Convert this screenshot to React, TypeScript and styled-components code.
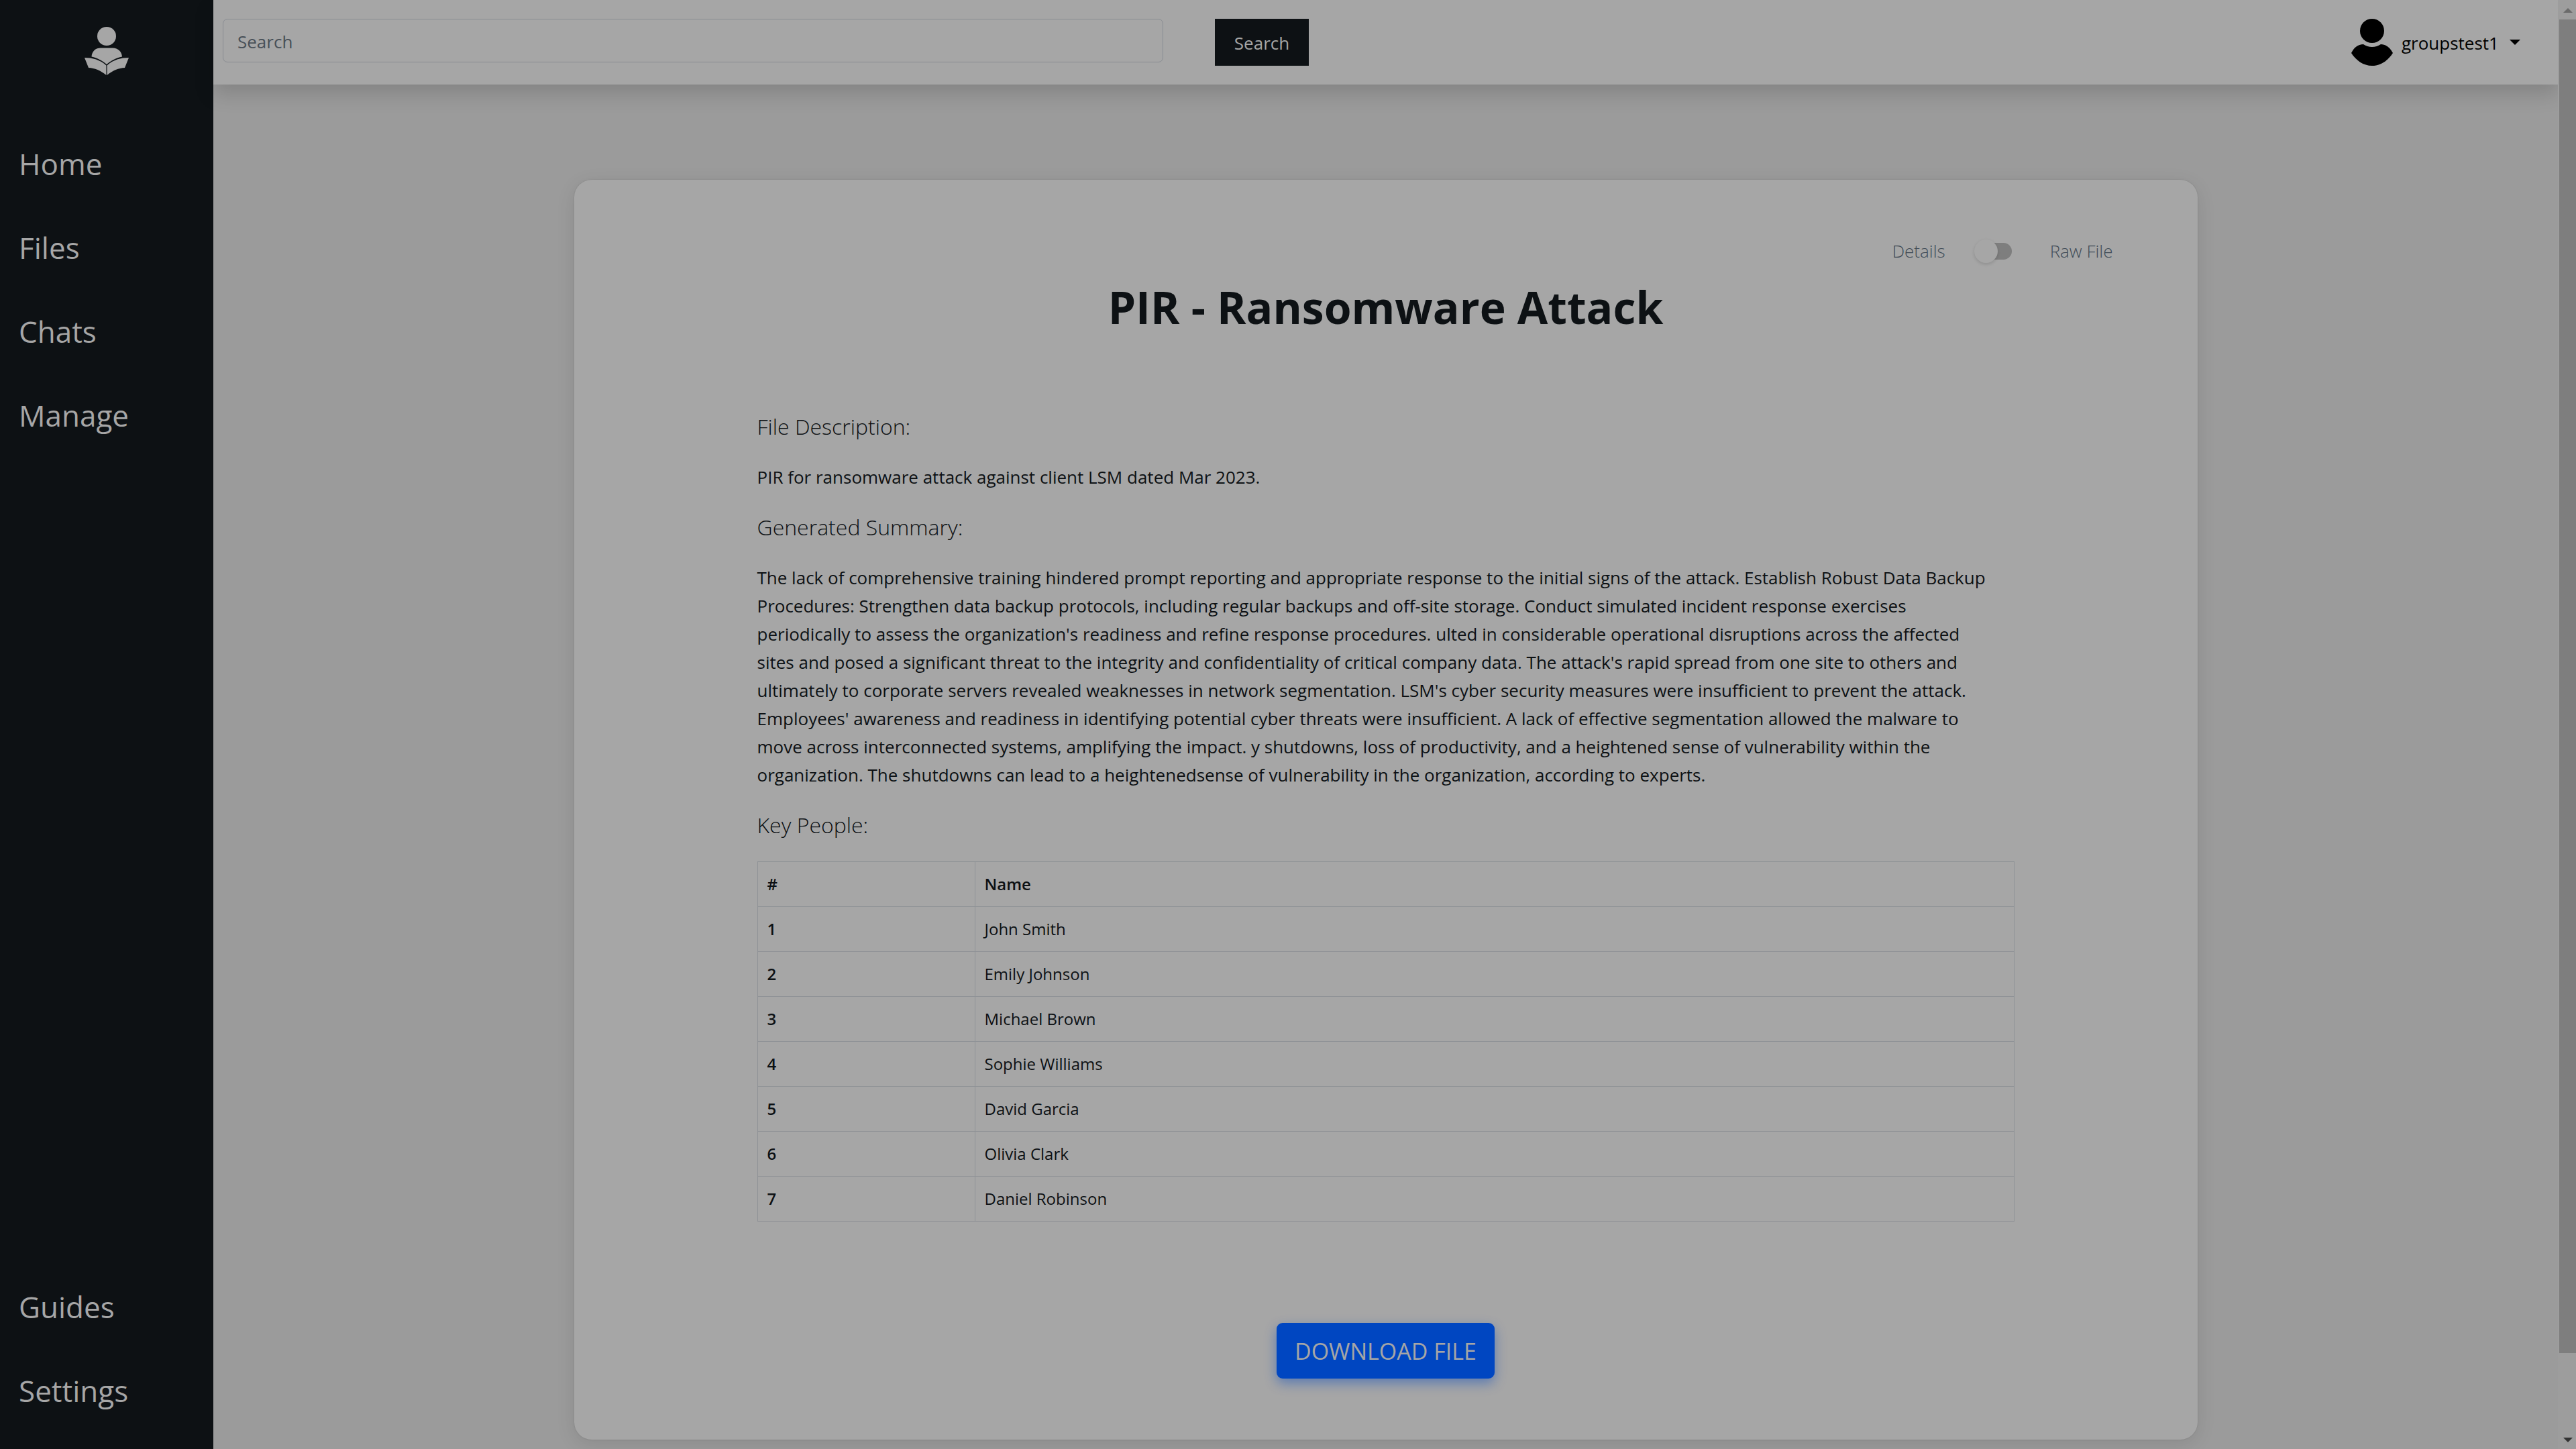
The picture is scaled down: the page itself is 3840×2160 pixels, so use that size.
import React from "react";
import styled, { createGlobalStyle } from "styled-components";

const ink = "#0d1114";
const paper = "#a6a6a6";
const line = "#8f9296";

const GlobalStyle = createGlobalStyle`
  *, *::before, *::after { box-sizing: border-box; }
  body {
    margin: 0;
    background: #9b9b9b;
    color: ${ink};
    font-family: "Segoe UI", "Open Sans", "Noto Sans", sans-serif;
    font-size: 26px;
    line-height: 42px;
  }
  button, input { font: inherit; }
`;

const Shell = styled.div`
  display: flex;
  height: 100vh;
  overflow: hidden;
`;

const Sidebar = styled.aside`
  flex: none;
  width: 318px;
  display: flex;
  flex-direction: column;
  padding: 40px 0 24px;
  background: ${ink};
`;

const Brand = styled.a`
  align-self: center;
  display: block;
  height: 72px;
  margin-bottom: 70px;
`;

const Nav = styled.nav<{ $bottom?: boolean }>`
  display: flex;
  flex-direction: column;
  margin-top: ${(p) => (p.$bottom ? "auto" : "0")};
`;

const NavLink = styled.a`
  padding: 28px;
  font-size: 44px;
  line-height: 69px;
  color: ${paper};
  text-decoration: none;
`;

const Main = styled.div`
  flex: 1;
  min-width: 0;
  display: flex;
  flex-direction: column;
`;

const TopBar = styled.header`
  display: flex;
  align-items: flex-start;
  justify-content: space-between;
  height: 126px;
  padding: 28px 56px 28px 14px;
  background: ${paper};
  box-shadow: 0 14px 28px rgba(0, 0, 0, 0.15);
`;

const SearchForm = styled.form`
  display: flex;
  align-items: flex-start;
  gap: 77px;
  flex: 0 1 1619px;
`;

const SearchInput = styled.input`
  flex: 1;
  min-width: 0;
  height: 65px;
  padding: 2px 21px 0;
  border: 1px solid #888c92;
  border-radius: 7px;
  background: transparent;
  color: ${ink};
  &::placeholder { color: #485058; opacity: 1; }
`;

const SearchButton = styled.button`
  width: 140px;
  height: 70px;
  padding: 2px 0 0;
  border: 0;
  background: ${ink};
  color: ${paper};
`;

const UserMenu = styled.button`
  display: flex;
  align-items: center;
  height: 70px;
  padding: 0;
  border: 0;
  background: none;
  color: #000;
`;

const UserName = styled.span`
  margin: 0 16px 0 13px;
  padding-top: 2px;
`;

const Content = styled.main`
  flex: 1;
  padding: 142px 28px 14px;
`;

const Card = styled.article`
  max-width: 2420px;
  margin: 0 auto;
  padding: 85px 126px 91px;
  border-radius: 26px;
  background: ${paper};
  box-shadow: 0 7px 28px rgba(0, 0, 0, 0.1), 0 0 2px rgba(0, 0, 0, 0.15);
`;

const ViewToggle = styled.div`
  display: flex;
  align-items: center;
  justify-content: flex-end;
  font-weight: 300;
  color: #414c57;
`;

const Switch = styled.input`
  appearance: none;
  display: flex;
  align-items: center;
  width: 52px;
  height: 25px;
  margin: 0 57px 0 47px;
  border-radius: 13px;
  background: #7e7e7e;
  &::before {
    content: "";
    width: 35px;
    height: 35px;
    margin-left: -4px;
    flex: none;
    border-radius: 50%;
    background: ${paper};
    box-shadow: 0 2px 5px rgba(0, 0, 0, 0.14);
  }
  &:checked::before { margin-left: 21px; }
`;

const Title = styled.h1`
  margin: 20px 0 116px;
  font-size: 66px;
  line-height: 84px;
  font-weight: 700;
  text-align: center;
`;

const Details = styled.div`
  display: flex;
  flex-direction: column;
  gap: 33px;
  padding: 0 147px;
`;

const SectionTitle = styled.h2`
  margin: 0;
  font-size: 32px;
  line-height: 42px;
  font-weight: 300;
`;

const Text = styled.p`
  margin: 0;
  padding-right: 36px;
`;

const People = styled.table`
  width: 100%;
  border-collapse: collapse;
  table-layout: fixed;
  font-size: 24px;
  line-height: 38px;
`;

const Cell = styled.td`
  padding: 14px;
  border: 1px solid ${line};
`;

const HeadCell = styled(Cell).attrs({ as: "th" })<{ $narrow?: boolean }>`
  width: ${(p) => (p.$narrow ? "324px" : "auto")};
  text-align: left;
  font-weight: 600;
`;

const Download = styled.button`
  display: block;
  width: 325px;
  height: 83px;
  margin: 151px auto 0;
  padding: 0;
  border: 0;
  border-radius: 9px;
  background: #0046c1;
  color: ${paper};
  font-size: 34px;
  box-shadow: 0 7px 18px rgba(0, 70, 193, 0.45);
`;

const ScrollTrack = styled.div`
  flex: none;
  width: 27px;
  display: flex;
  flex-direction: column;
  align-items: center;
  justify-content: space-between;
  padding: 12px 0 10px 2px;
  background: #9d9d9d;
`;

const ScrollThumb = styled.div`
  align-self: stretch;
  height: 93%;
  margin: 10px 0 auto;
  background: #7e7e7e;
`;

const people = [
  "John Smith",
  "Emily Johnson",
  "Michael Brown",
  "Sophie Williams",
  "David Garcia",
  "Olivia Clark",
  "Daniel Robinson",
];

const summary =
  "The lack of comprehensive training hindered prompt reporting and appropriate response to the initial signs of the attack. Establish Robust Data Backup Procedures: Strengthen data backup protocols, including regular backups and off-site storage. Conduct simulated incident response exercises periodically to assess the organization's readiness and refine response procedures. ulted in considerable operational disruptions across the affected sites and posed a significant threat to the integrity and confidentiality of critical company data. The attack's rapid spread from one site to others and ultimately to corporate servers revealed weaknesses in network segmentation. LSM's cyber security measures were insufficient to prevent the attack. Employees' awareness and readiness in identifying potential cyber threats were insufficient. A lack of effective segmentation allowed the malware to move across interconnected systems, amplifying the impact. y shutdowns, loss of productivity, and a heightened sense of vulnerability within the organization. The shutdowns can lead to a heightenedsense of vulnerability in the organization, according to experts.";

const ReaderLogo = () => (
  <svg width="66" height="72" viewBox="0 0 66 72" fill={paper} aria-hidden="true">
    <circle cx="33" cy="14" r="14" />
    <path d="M10.5 44.5C11 36 17 31.5 24 31.5H42C50 31.5 55.5 37 56 44.5C47 46.5 39 50.5 33 56C27 50.5 19 46.5 10.5 44.5Z" />
    <path d="M0 46C12 46 23 49 32.4 57.5V72C24 65 15 61.500 6 61Z" />
    <path d="M66 46C54 46 43 49 33.600 57.5V72C42 65 51 61.500 60 61Z" />
  </svg>
);

const UserIcon = () => (
  <svg width="62" height="70" viewBox="0 0 62 70" aria-hidden="true">
    <circle cx="31" cy="18" r="18" />
    <path d="M18 38Q24 42 31 42Q38 42 44 38C52 38 58 43 62 51C55 62 44 70 31 70C18 70 7 62 0 51C4 43 10 38 18 38Z" />
  </svg>
);

const Arrow = ({ up, size = 14, color }: { up?: boolean; size?: number; color: string }) => (
  <svg width={size} height={size / 2} viewBox="0 0 14 7" fill={color} aria-hidden="true">
    <path d={up ? "M0 7L7 0L14 7Z" : "M0 0H14L7 7Z"} />
  </svg>
);

export default function App() {
  return (
    <>
      <GlobalStyle />
      <Shell>
        <Sidebar>
          <Brand href="#" aria-label="Home page"><ReaderLogo /></Brand>
          <Nav>
            {["Home", "Files", "Chats", "Manage"].map((label) => (
              <NavLink key={label} href="#">{label}</NavLink>
            ))}
          </Nav>
          <Nav $bottom>
            {["Guides", "Settings"].map((label) => (
              <NavLink key={label} href="#">{label}</NavLink>
            ))}
          </Nav>
        </Sidebar>
        <Main>
          <TopBar>
            <SearchForm onSubmit={(e) => e.preventDefault()}>
              <SearchInput type="text" placeholder="Search" aria-label="Search" />
              <SearchButton type="submit">Search</SearchButton>
            </SearchForm>
            <UserMenu type="button">
              <UserIcon />
              <UserName>groupstest1</UserName>
              <Arrow size={16} color="#000" />
            </UserMenu>
          </TopBar>
          <Content>
            <Card>
              <ViewToggle>
                <label htmlFor="view">Details</label>
                <Switch id="view" type="checkbox" role="switch" />
                <label htmlFor="view">Raw File</label>
              </ViewToggle>
              <Title>PIR - Ransomware Attack</Title>
              <Details>
                <SectionTitle>File Description:</SectionTitle>
                <Text>PIR for ransomware attack against client LSM dated Mar 2023.</Text>
                <SectionTitle>Generated Summary:</SectionTitle>
                <Text>{summary}</Text>
                <SectionTitle>Key People:</SectionTitle>
                <People>
                  <thead>
                    <tr>
                      <HeadCell $narrow scope="col">#</HeadCell>
                      <HeadCell scope="col">Name</HeadCell>
                    </tr>
                  </thead>
                  <tbody>
                    {people.map((name, i) => (
                      <tr key={name}>
                        <HeadCell scope="row">{i + 1}</HeadCell>
                        <Cell>{name}</Cell>
                      </tr>
                    ))}
                  </tbody>
                </People>
              </Details>
              <Download type="button">DOWNLOAD FILE</Download>
            </Card>
          </Content>
        </Main>
        <ScrollTrack aria-hidden="true">
          <Arrow up color="#6b6b6b" />
          <ScrollThumb />
          <Arrow color="#333" />
        </ScrollTrack>
      </Shell>
    </>
  );
}
